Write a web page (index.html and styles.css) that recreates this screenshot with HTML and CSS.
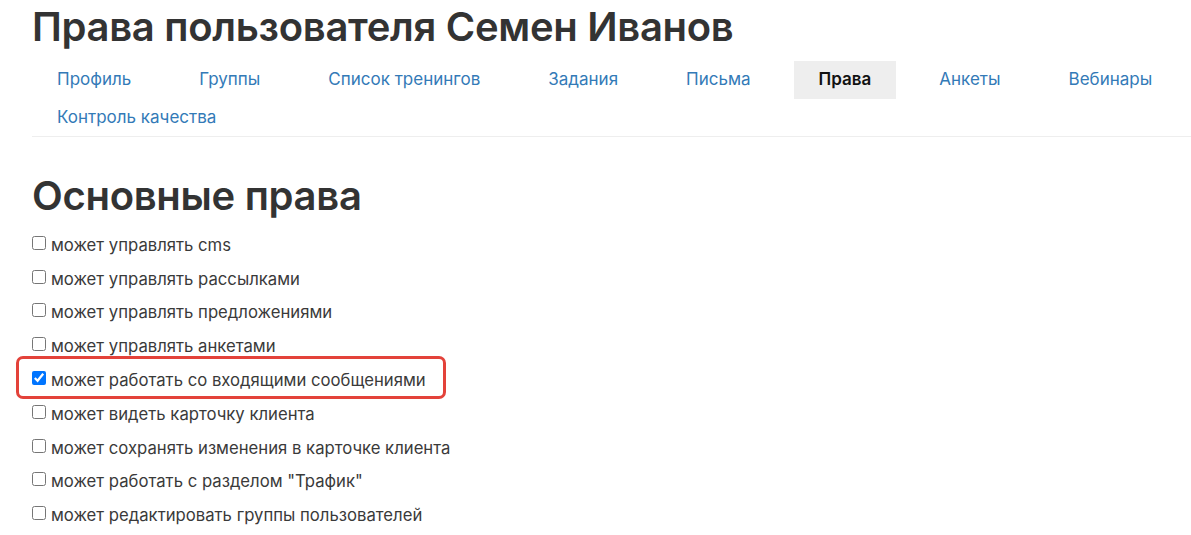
FILE: index.html
```html
<!DOCTYPE html>
<html lang="ru">
<head>
    <meta charset="UTF-8">
    <title>Права пользователя Семен Иванов</title>
    <link rel="stylesheet" href="styles.css">
</head>
<body>
    <div class="page">
        <h1>Права пользователя Семен Иванов</h1>
        <ul class="tabs">
            <li><a href="#">Профиль</a></li>
            <li><a href="#">Группы</a></li>
            <li><a href="#">Список тренингов</a></li>
            <li><a href="#">Задания</a></li>
            <li><a href="#">Письма</a></li>
            <li class="active"><a href="#">Права</a></li>
            <li><a href="#">Анкеты</a></li>
            <li><a href="#">Вебинары</a></li>
            <li><a href="#">Контроль качества</a></li>
        </ul>

        <h2>Основные права</h2>
        <div class="rights">
            <label class="right"><input type="checkbox"> может управлять cms</label>
            <label class="right"><input type="checkbox"> может управлять рассылками</label>
            <label class="right"><input type="checkbox"> может управлять предложениями</label>
            <label class="right"><input type="checkbox"> может управлять анкетами</label>
            <label class="right marked"><input type="checkbox" checked> может работать со входящими сообщениями</label>
            <label class="right"><input type="checkbox"> может видеть карточку клиента</label>
            <label class="right"><input type="checkbox"> может сохранять изменения в карточке клиента</label>
            <label class="right"><input type="checkbox"> может работать с разделом "Трафик"</label>
            <label class="right"><input type="checkbox"> может редактировать группы пользователей</label>
        </div>
    </div>
</body>
</html>
```

FILE: styles.css
```css
body { margin: 0; font-family: Inter, "Noto Sans", sans-serif; color: #333; background: #fff; overflow: hidden; }
.page { padding-left: 32px; }
h1 { font-size: 40px; font-weight: 600; line-height: 48px; margin: 3px 0 10px; letter-spacing: -0.3px; }
.tabs { list-style: none; margin: 0; padding: 0; display: flex; flex-wrap: wrap; column-gap: 18px; border-bottom: 1px solid #eee; }
.tabs a { display: block; padding: 0 25px; line-height: 37.5px; font-size: 17px; color: #337ab7; text-decoration: none; }
.tabs .active a { background: #eee; color: #111; font-weight: 600; }
h2 { font-size: 40px; font-weight: 600; line-height: 48px; margin: 35px 0 8px; letter-spacing: -0.3px; }
.rights { display: flex; flex-direction: column; }
.right { display: flex; align-items: center; height: 33.8px; font-size: 16.7px; color: #3a3a3a; position: relative; }
.right input { width: 14px; height: 14px; margin: 0 5px 4px 0; }
.marked::before { content: ""; position: absolute; left: -16px; top: -7px; width: 430px; height: 43px; box-sizing: border-box; border: 3px solid #e3423a; border-radius: 7px; }
```
